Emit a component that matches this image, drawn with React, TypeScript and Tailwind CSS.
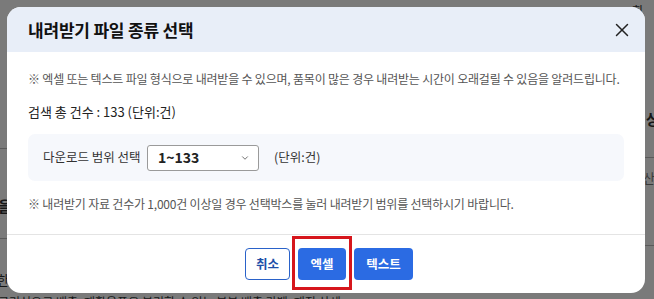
import { X, ChevronDown } from "lucide-react";

const FONT = { fontFamily: '"Noto Sans CJK KR", "Noto Sans", sans-serif' };

function BackdropPage() {
  // page content peeking out from behind the dimmed overlay
  return (
    <div className="absolute inset-0 text-[#161616]" style={FONT}>
      <span className="absolute left-[632px] top-[2px] text-[12px]">회원</span>
      <span className="absolute left-[646px] top-[108px] text-[15px] font-bold">상</span>
      <div className="absolute left-[645px] top-[157px] h-px w-[9px] bg-[#5a5a5a]" />
      <span className="absolute left-[643px] top-[168px] text-[13px] text-[#3a3a3a]">산</span>
      <div className="absolute left-[645px] top-[245px] h-px w-[9px] bg-[#5a5a5a]" />
      <div className="absolute left-0 top-[148px] h-px w-[7px] bg-[#5a5a5a]" />
      <span className="absolute left-[-2px] top-[195px] text-[15px] font-bold">을</span>
      <div className="absolute left-0 top-[238px] h-px w-[7px] bg-[#5a5a5a]" />
      <span className="absolute left-[-3px] top-[270px] text-[13px]">한</span>
      <span className="absolute left-[-2px] top-[293px] whitespace-nowrap text-[12px]">
        클리싱으로 배출, 재활용품은 분리할 수 있는 부분 배출 라벨, 재질 상세
      </span>
    </div>
  );
}

export default function App() {
  return (
    <div className="relative h-[299px] w-[654px] overflow-hidden bg-[#7a7a7a]" style={FONT}>
      <BackdropPage />
      <div className="absolute left-[7px] top-[7px] flex h-[286px] w-[638px] flex-col overflow-hidden rounded-[14px] bg-white">
        <div className="flex h-[45px] shrink-0 items-center justify-between bg-[#e8eef8] pl-[21px] pr-[12px]">
          <h2 className="text-[17px] font-bold tracking-[-0.2px] text-[#111]">내려받기 파일 종류 선택</h2>
          <X className="h-[22px] w-[22px] text-[#222]" strokeWidth={1.6} />
        </div>

        <div className="flex flex-col px-[21px]">
          <p className="mt-[18px] text-[12px] leading-[18px] tracking-[-0.2px] text-[#555]">
            ※ 엑셀 또는 텍스트 파일 형식으로 내려받을 수 있으며, 품목이 많은 경우 내려받는 시간이 오래걸릴 수 있음을 알려드립니다.
          </p>
          <p className="mt-[14px] text-[13px] leading-[20px] text-[#222]">검색 총 건수 : 133 (단위:건)</p>

          <div className="mt-[12px] flex h-[47px] w-[596px] items-center rounded-[7px] bg-[#f6f8fc] pl-[15px]">
            <span className="w-[104px] text-[12.5px] text-[#333]">다운로드 범위 선택</span>
            <div className="flex h-[26px] w-[112px] items-center justify-between rounded-[3px] border border-[#9a9a9a] bg-white pr-[8px] pl-[10px]">
              <span className="text-[14px] font-semibold text-[#222]">1~133</span>
              <ChevronDown className="h-[10px] w-[10px] text-[#555]" strokeWidth={2} />
            </div>
            <span className="ml-[15px] text-[12.5px] text-[#333]">(단위:건)</span>
          </div>

          <p className="mt-[14px] text-[12px] leading-[18px] tracking-[-0.2px] text-[#555]">
            ※ 내려받기 자료 건수가 1,000건 이상일 경우 선택박스를 눌러 내려받기 범위를 선택하시기 바랍니다.
          </p>
        </div>

        <div className="mt-[21px] h-px w-full bg-[#e4e4e4]" />

        <div className="mt-[13px] flex items-start justify-center gap-[2px] pl-[6px]">
          <button className="h-[32px] w-[45px] rounded-[4px] border border-[#2a62c9] bg-white text-[12.5px] font-bold text-[#1d4fa8]">
            취소
          </button>
          <div className="-mt-[12px] flex h-[54px] w-[60px] items-start justify-center border-[3px] border-[#d6161c] pt-[9px]">
            <button className="h-[32px] w-[48px] rounded-[4px] bg-[#2b6be3] text-[12.5px] font-bold text-white">
              엑셀
            </button>
          </div>
          <button className="h-[32px] w-[59px] rounded-[4px] bg-[#2b6be3] text-[12.5px] font-bold text-white">
            텍스트
          </button>
        </div>
      </div>
    </div>
  );
}
